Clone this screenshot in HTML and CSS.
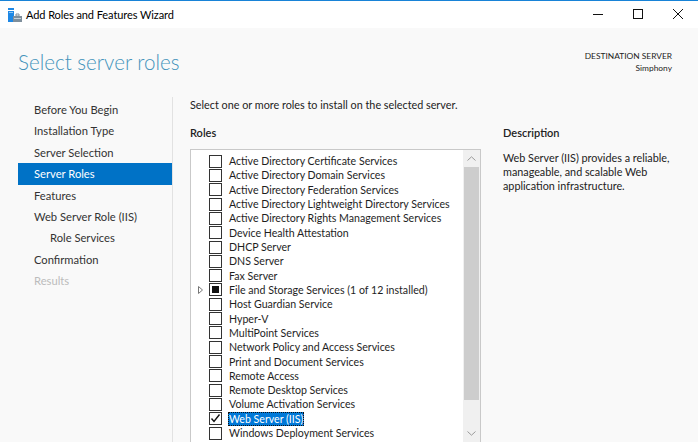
FILE: index.html
```html
<!DOCTYPE html>
<html>
<head>
<meta charset="utf-8">
<link rel="stylesheet" href="styles.css">
</head>
<body>
<div class="window">
  <div class="titlebar">
    <svg class="app-icon" width="16" height="16" viewBox="0 0 16 16">
      <rect x="1" y="1" width="6" height="2" fill="#1e88e5"/>
      <rect x="1" y="4" width="6" height="11" fill="#1e88e5"/>
      <rect x="2" y="5" width="4" height="1" fill="#8cc4f2"/>
      <path d="M6 9 h9 v6 h-9 z" fill="#7f8f9c"/>
      <path d="M9 7 h3 v2 h-3 z" fill="none" stroke="#7f8f9c" stroke-width="1"/>
      <rect x="7" y="11" width="7" height="1" fill="#c7d2da"/>
    </svg>
    <span class="title">Add Roles and Features Wizard</span>
    <div class="controls">
      <svg class="ctl" width="40" height="27" viewBox="0 0 40 27"><path d="M15 13.5 h10" stroke="#111" stroke-width="1"/></svg>
      <svg class="ctl" width="40" height="27" viewBox="0 0 40 27"><rect x="15.5" y="8.5" width="9" height="9" fill="none" stroke="#111" stroke-width="1"/></svg>
      <svg class="ctl" width="40" height="27" viewBox="0 0 40 27"><path d="M15 8 L25 18 M25 8 L15 18" stroke="#111" stroke-width="1"/></svg>
    </div>
  </div>
  <div class="content">
    <div class="header">
      <h1 class="heading">Select server roles</h1>
      <div class="dest">
        <div>DESTINATION SERVER</div>
        <div>Simphony</div>
      </div>
    </div>
    <div class="main">
      <nav class="nav">
        <div class="nav-item">Before You Begin</div>
        <div class="nav-item">Installation Type</div>
        <div class="nav-item">Server Selection</div>
        <div class="nav-item active">Server Roles</div>
        <div class="nav-item">Features</div>
        <div class="nav-item">Web Server Role (IIS)</div>
        <div class="nav-item sub">Role Services</div>
        <div class="nav-item">Confirmation</div>
        <div class="nav-item disabled">Results</div>
      </nav>
      <section class="center">
        <p class="intro">Select one or more roles to install on the selected server.</p>
        <div class="label">Roles</div>
        <div class="listbox">
          <div class="rows">
            <div class="row"><span class="exp"></span><span class="cb"></span><span class="txt">Active Directory Certificate Services</span></div>
            <div class="row"><span class="exp"></span><span class="cb"></span><span class="txt">Active Directory Domain Services</span></div>
            <div class="row"><span class="exp"></span><span class="cb"></span><span class="txt">Active Directory Federation Services</span></div>
            <div class="row"><span class="exp"></span><span class="cb"></span><span class="txt">Active Directory Lightweight Directory Services</span></div>
            <div class="row"><span class="exp"></span><span class="cb"></span><span class="txt">Active Directory Rights Management Services</span></div>
            <div class="row"><span class="exp"></span><span class="cb"></span><span class="txt">Device Health Attestation</span></div>
            <div class="row"><span class="exp"></span><span class="cb"></span><span class="txt">DHCP Server</span></div>
            <div class="row"><span class="exp"></span><span class="cb"></span><span class="txt">DNS Server</span></div>
            <div class="row"><span class="exp"></span><span class="cb"></span><span class="txt">Fax Server</span></div>
            <div class="row"><span class="exp"><svg width="6" height="8" viewBox="0 0 6 8"><path d="M0.5 0.5 L4.5 4 L0.5 7.5 Z" fill="none" stroke="#777" stroke-width="1"/></svg></span><span class="cb partial"></span><span class="txt">File and Storage Services (1 of 12 installed)</span></div>
            <div class="row"><span class="exp"></span><span class="cb"></span><span class="txt">Host Guardian Service</span></div>
            <div class="row"><span class="exp"></span><span class="cb"></span><span class="txt">Hyper-V</span></div>
            <div class="row"><span class="exp"></span><span class="cb"></span><span class="txt">MultiPoint Services</span></div>
            <div class="row"><span class="exp"></span><span class="cb"></span><span class="txt">Network Policy and Access Services</span></div>
            <div class="row"><span class="exp"></span><span class="cb"></span><span class="txt">Print and Document Services</span></div>
            <div class="row"><span class="exp"></span><span class="cb"></span><span class="txt">Remote Access</span></div>
            <div class="row"><span class="exp"></span><span class="cb"></span><span class="txt">Remote Desktop Services</span></div>
            <div class="row"><span class="exp"></span><span class="cb"></span><span class="txt">Volume Activation Services</span></div>
            <div class="row"><span class="exp"></span><span class="cb checked"><svg width="11" height="11" viewBox="0 0 11 11"><path d="M1.5 5.5 L4 8.5 L9.5 1.5" fill="none" stroke="#111" stroke-width="1.4"/></svg></span><span class="txt selected">Web Server (IIS)</span></div>
            <div class="row"><span class="exp"></span><span class="cb"></span><span class="txt">Windows Deployment Services</span></div>
          </div>
          <div class="scrollbar">
            <div class="arrow"><svg width="9" height="5" viewBox="0 0 9 5"><path d="M0.5 4.5 L4.5 0.8 L8.5 4.5" fill="none" stroke="#9a9a9a" stroke-width="1"/></svg></div>
            <div class="thumb"></div>
            <div class="track"></div>
            <div class="arrow down"><svg width="9" height="5" viewBox="0 0 9 5"><path d="M0.5 0.5 L4.5 4.2 L8.5 0.5" fill="none" stroke="#9a9a9a" stroke-width="1"/></svg></div>
          </div>
        </div>
      </section>
      <aside class="desc">
        <div class="label">Description</div>
        <p class="desc-text">Web Server (IIS) provides a reliable,<br>manageable, and scalable Web<br>application infrastructure.</p>
      </aside>
    </div>
  </div>
</div>
</body>
</html>
```

FILE: styles.css
```css
* { box-sizing: border-box; }
html, body {
  margin: 0;
  padding: 0;
  width: 698px;
  height: 442px;
  overflow: hidden;
  font-family: Lato, "Noto Sans", sans-serif;
  color: #1e1e1e;
}
.window {
  width: 698px;
  height: 442px;
  border-top: 1px solid #1883d7;
  display: flex;
  flex-direction: column;
  background: #f9f9f9;
}
.titlebar {
  height: 27px;
  background: #fff;
  display: flex;
  align-items: center;
  padding-left: 7px;
  flex: none;
}
.app-icon { display: block; }
.title {
  margin-left: 3px;
  font-size: 11px;
  color: #000;
  margin-top: -1px;
  letter-spacing: -0.08px;
}
.controls {
  margin-left: auto;
  display: flex;
}
.ctl { display: block; }
.content {
  flex: 1;
  display: flex;
  flex-direction: column;
  min-height: 0;
}
.header {
  display: flex;
  justify-content: space-between;
  align-items: flex-start;
  padding: 20px 26px 0 18px;
  height: 69px;
}
.heading {
  margin: 0;
  font-weight: 300;
  font-size: 20.6px;
  color: #4393bb;
  line-height: 28px;
}
.dest {
  text-align: right;
  font-size: 8.4px;
  line-height: 12px;
  color: #222;
  padding-top: 2px;
}
.main {
  display: flex;
  flex: 1;
  min-height: 0;
}
.nav {
  width: 173px;
  border-right: 1px solid #e2e2e2;
  padding-top: 2px;
  flex: none;
}
.nav-item {
  height: 21.4px;
  line-height: 21.4px;
  font-size: 11.2px;
  padding-left: 16px;
  margin-left: 18px;
  color: #333;
}
.nav-item.sub { padding-left: 32px; }
.nav-item.active { background: #0072c6; color: #fff; }
.nav-item.disabled { color: #bcbcbc; }
.center {
  width: 308px;
  padding-left: 17px;
  flex: none;
  display: flex;
  flex-direction: column;
}
.intro {
  margin: 0;
  font-size: 10.8px;
  line-height: 14px;
  padding-top: 1px;
  color: #222;
  white-space: nowrap;
}
.label {
  font-size: 11px;
  font-weight: 600;
  line-height: 14px;
  margin-top: 14px;
  color: #222;
}
.listbox {
  margin-top: 9px;
  flex: 1;
  border: 1px solid #c9c9c9;
  border-bottom: none;
  background: #fff;
  display: flex;
  width: 291px;
  min-height: 0;
  overflow: hidden;
}
.rows {
  flex: 1;
  padding-top: 4px;
  padding-left: 7px;
  min-width: 0;
}
.row {
  height: 14.32px;
  display: flex;
  align-items: center;
  font-size: 10.6px;
  color: #1e1e1e;
  white-space: nowrap;
}
.exp {
  width: 11px;
  display: flex;
  align-items: center;
  flex: none;
}
.cb {
  width: 13px;
  height: 13px;
  border: 1px solid #333;
  background: #fff;
  flex: none;
  display: flex;
  align-items: center;
  justify-content: center;
}
.cb.partial::after {
  content: "";
  width: 7px;
  height: 7px;
  background: #111;
}
.txt {
  margin-left: 6px;
  padding: 0 1px;
  line-height: 14px;
}
.txt.selected {
  background: #0078d7;
  color: #fff;
  outline: 1px dotted #111;
  outline-offset: -1px;
}
.scrollbar {
  width: 17px;
  flex: none;
  display: flex;
  flex-direction: column;
  background: #f0f0f0;
}
.arrow {
  height: 17px;
  display: flex;
  align-items: center;
  justify-content: center;
  flex: none;
}
.thumb {
  height: 233px;
  background: #cdcdcd;
  margin: 0 1px;
  flex: none;
}
.track { flex: 1; }
.desc {
  padding-left: 22px;
  flex: 1;
}
.desc .label { margin-top: 29px; }
.desc-text {
  margin: 11px 0 0 0;
  font-size: 10.8px;
  line-height: 14px;
  color: #222;
  white-space: nowrap;
}
```
